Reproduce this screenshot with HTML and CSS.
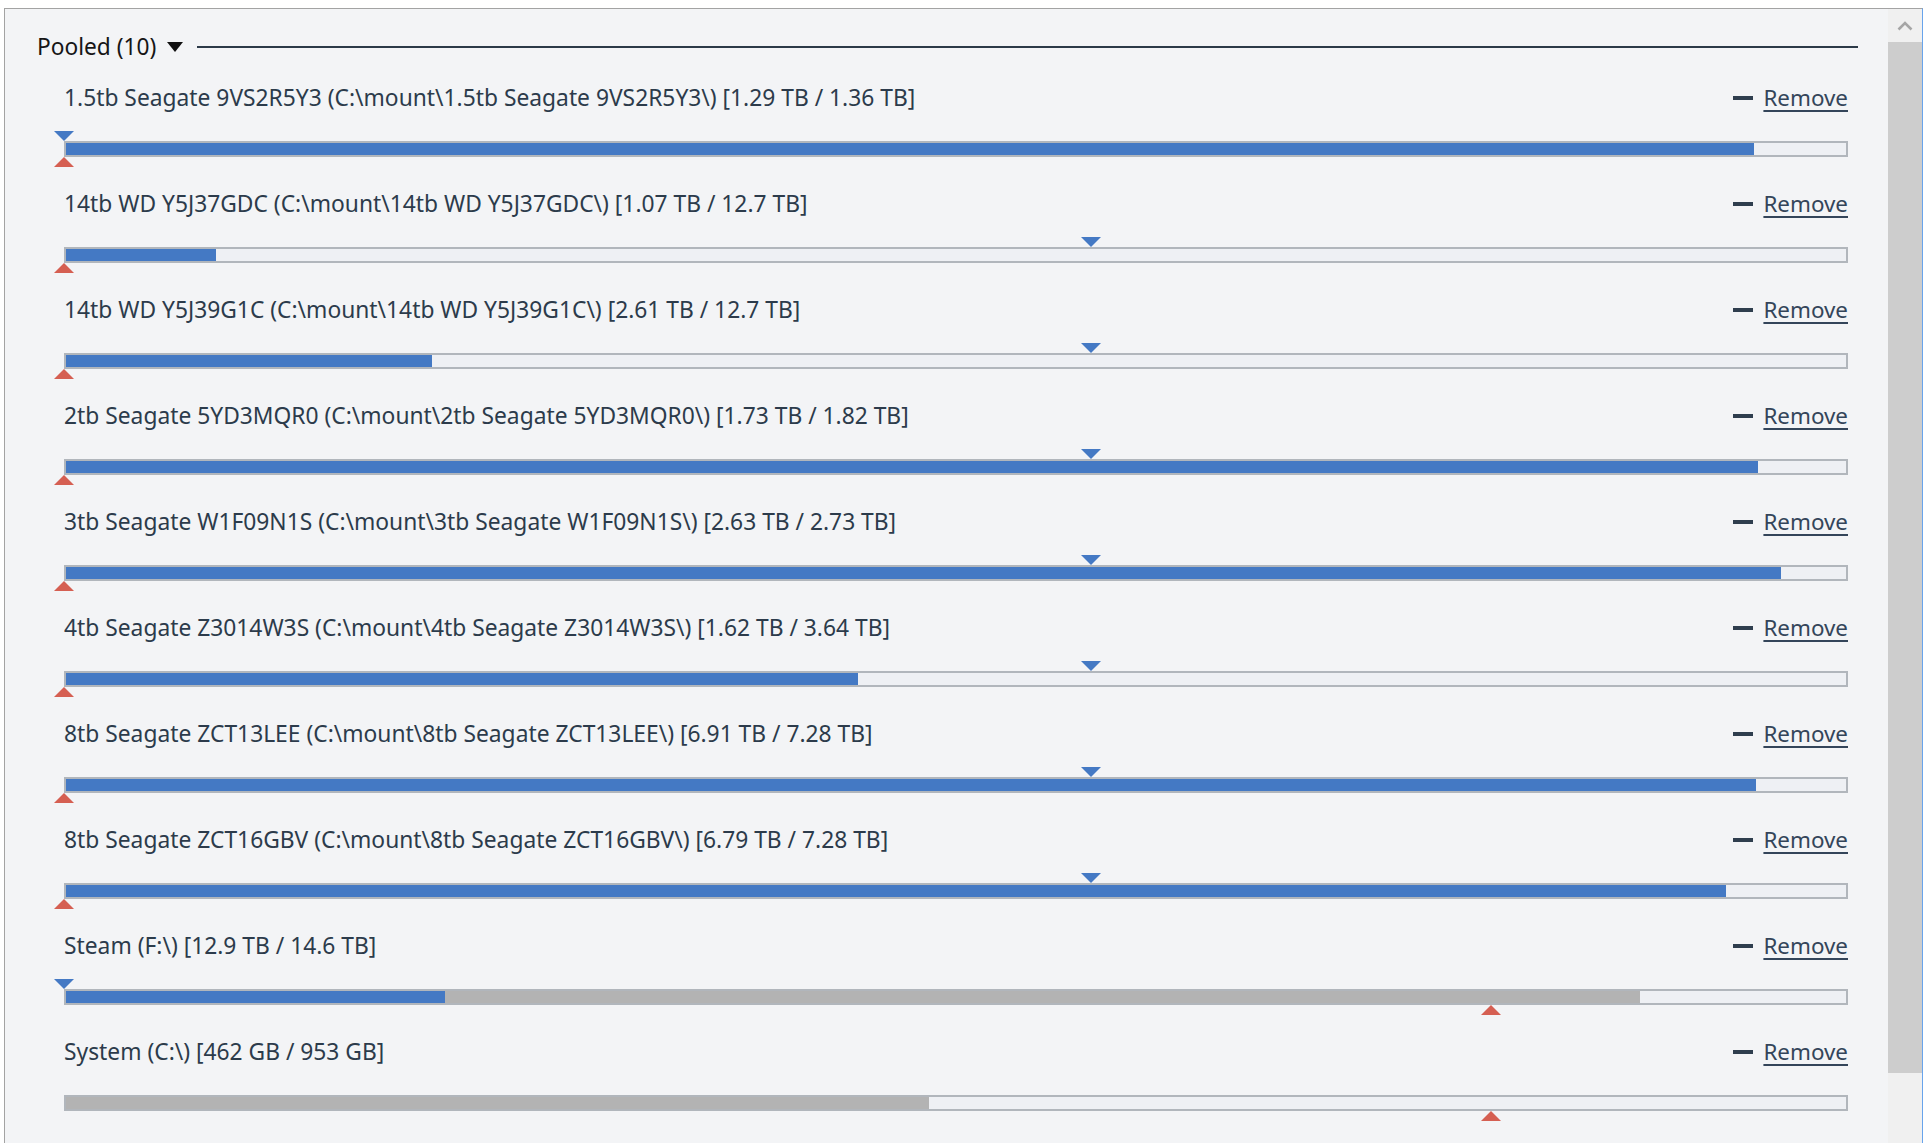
FILE: index.html
```html
<!DOCTYPE html>
<html>
<head>
<meta charset="utf-8">
<link rel="stylesheet" href="styles.css">
</head>
<body>
<div class="window">
  <div class="frame">
    <div class="content">
      <div class="legend">
        <span class="legend-title">Pooled (10)</span>
        <span class="caret"></span>
        <span class="legend-line"></span>
      </div>

      <div class="disk">
        <div class="disk-head"><span class="disk-name">1.5tb Seagate 9VS2R5Y3 (C:\mount\1.5tb Seagate 9VS2R5Y3\) [1.29 TB / 1.36 TB]</span><a class="remove"><span class="dash"></span><span class="remove-text">Remove</span></a></div>
        <div class="meter">
          <div class="track"><div class="fill fill-blue" style="width:94.85%"></div></div>
          <span class="mark mark-top" style="left:0%"></span>
          <span class="mark mark-bottom" style="left:0%"></span>
        </div>
      </div>

      <div class="disk">
        <div class="disk-head"><span class="disk-name">14tb WD Y5J37GDC (C:\mount\14tb WD Y5J37GDC\) [1.07 TB / 12.7 TB]</span><a class="remove"><span class="dash"></span><span class="remove-text">Remove</span></a></div>
        <div class="meter">
          <div class="track"><div class="fill fill-blue" style="width:8.43%"></div></div>
          <span class="mark mark-top" style="left:57.57%"></span>
          <span class="mark mark-bottom" style="left:0%"></span>
        </div>
      </div>

      <div class="disk">
        <div class="disk-head"><span class="disk-name">14tb WD Y5J39G1C (C:\mount\14tb WD Y5J39G1C\) [2.61 TB / 12.7 TB]</span><a class="remove"><span class="dash"></span><span class="remove-text">Remove</span></a></div>
        <div class="meter">
          <div class="track"><div class="fill fill-blue" style="width:20.55%"></div></div>
          <span class="mark mark-top" style="left:57.57%"></span>
          <span class="mark mark-bottom" style="left:0%"></span>
        </div>
      </div>

      <div class="disk">
        <div class="disk-head"><span class="disk-name">2tb Seagate 5YD3MQR0 (C:\mount\2tb Seagate 5YD3MQR0\) [1.73 TB / 1.82 TB]</span><a class="remove"><span class="dash"></span><span class="remove-text">Remove</span></a></div>
        <div class="meter">
          <div class="track"><div class="fill fill-blue" style="width:95.05%"></div></div>
          <span class="mark mark-top" style="left:57.57%"></span>
          <span class="mark mark-bottom" style="left:0%"></span>
        </div>
      </div>

      <div class="disk">
        <div class="disk-head"><span class="disk-name">3tb Seagate W1F09N1S (C:\mount\3tb Seagate W1F09N1S\) [2.63 TB / 2.73 TB]</span><a class="remove"><span class="dash"></span><span class="remove-text">Remove</span></a></div>
        <div class="meter">
          <div class="track"><div class="fill fill-blue" style="width:96.34%"></div></div>
          <span class="mark mark-top" style="left:57.57%"></span>
          <span class="mark mark-bottom" style="left:0%"></span>
        </div>
      </div>

      <div class="disk">
        <div class="disk-head"><span class="disk-name">4tb Seagate Z3014W3S (C:\mount\4tb Seagate Z3014W3S\) [1.62 TB / 3.64 TB]</span><a class="remove"><span class="dash"></span><span class="remove-text">Remove</span></a></div>
        <div class="meter">
          <div class="track"><div class="fill fill-blue" style="width:44.5%"></div></div>
          <span class="mark mark-top" style="left:57.57%"></span>
          <span class="mark mark-bottom" style="left:0%"></span>
        </div>
      </div>

      <div class="disk">
        <div class="disk-head"><span class="disk-name">8tb Seagate ZCT13LEE (C:\mount\8tb Seagate ZCT13LEE\) [6.91 TB / 7.28 TB]</span><a class="remove"><span class="dash"></span><span class="remove-text">Remove</span></a></div>
        <div class="meter">
          <div class="track"><div class="fill fill-blue" style="width:94.92%"></div></div>
          <span class="mark mark-top" style="left:57.57%"></span>
          <span class="mark mark-bottom" style="left:0%"></span>
        </div>
      </div>

      <div class="disk">
        <div class="disk-head"><span class="disk-name">8tb Seagate ZCT16GBV (C:\mount\8tb Seagate ZCT16GBV\) [6.79 TB / 7.28 TB]</span><a class="remove"><span class="dash"></span><span class="remove-text">Remove</span></a></div>
        <div class="meter">
          <div class="track"><div class="fill fill-blue" style="width:93.27%"></div></div>
          <span class="mark mark-top" style="left:57.57%"></span>
          <span class="mark mark-bottom" style="left:0%"></span>
        </div>
      </div>

      <div class="disk">
        <div class="disk-head"><span class="disk-name">Steam (F:\) [12.9 TB / 14.6 TB]</span><a class="remove"><span class="dash"></span><span class="remove-text">Remove</span></a></div>
        <div class="meter">
          <div class="track"><div class="fill fill-blue" style="width:21.3%"></div><div class="fill fill-gray" style="width:67.1%"></div></div>
          <span class="mark mark-top" style="left:0%"></span>
          <span class="mark mark-bottom" style="left:80%"></span>
        </div>
      </div>

      <div class="disk">
        <div class="disk-head"><span class="disk-name">System (C:\) [462 GB / 953 GB]</span><a class="remove"><span class="dash"></span><span class="remove-text">Remove</span></a></div>
        <div class="meter">
          <div class="track"><div class="fill fill-gray" style="width:48.5%"></div></div>
          <span class="mark mark-bottom" style="left:80%"></span>
        </div>
      </div>
    </div>

    <div class="scrollbar">
      <div class="scroll-btn">
        <svg width="16" height="11" viewBox="0 0 16 11"><polyline points="1.5,9.5 8,3 14.5,9.5" fill="none" stroke="#a6a6a6" stroke-width="2.6"/></svg>
      </div>
      <div class="scroll-thumb"></div>
      <div class="scroll-rest"></div>
    </div>
  </div>
</div>
</body>
</html>
```

FILE: styles.css
```css
* { box-sizing: border-box; }

html, body {
  margin: 0;
  padding: 0;
  background: #ffffff;
  overflow: hidden;
  height: 100%;
}

.window {
  height: 100vh;
  padding: 8px 0 0 4px;
}

.frame {
  display: flex;
  height: 100%;
  border-top: 1px solid #a3a3a3;
  border-left: 1px solid #a3a3a3;
  border-right: 1px solid #68a4ec;
  background: #f3f4f6;
}

.content {
  flex: 1;
  min-width: 0;
  padding: 23px 30px 0 32px;
  font-family: "Noto Sans", "Open Sans", sans-serif;
  overflow: hidden;
}

.legend {
  display: flex;
  align-items: center;
  height: 30px;
  margin-bottom: 21px;
}

.legend-title {
  font-size: 22.7px;
  color: #161616;
  line-height: 30px;
  white-space: nowrap;
}

.caret {
  width: 0;
  height: 0;
  border-left: 8.5px solid transparent;
  border-right: 8.5px solid transparent;
  border-top: 10px solid #111111;
  margin: 0 14px 0 11px;
}

.legend-line {
  flex: 1;
  height: 2px;
  background: #2c3a48;
}

.disk {
  margin: 0 10px 0 27px;
  padding-bottom: 22px;
}

.disk-head {
  display: flex;
  justify-content: space-between;
  align-items: center;
  height: 30px;
}

.disk-name {
  font-size: 22.8px;
  line-height: 30px;
  color: #2c3b4b;
  white-space: nowrap;
}

.remove {
  display: flex;
  align-items: center;
  color: #34455a;
  cursor: pointer;
}

.dash {
  width: 20px;
  height: 4px;
  background: #2f3e4e;
  margin-right: 10px;
}

.remove-text {
  font-size: 22.4px;
  line-height: 30px;
  text-decoration: underline;
  text-underline-offset: 4px;
}

.meter {
  position: relative;
  margin-top: 28px;
  margin-bottom: 10px;
}

.track {
  display: flex;
  height: 16px;
  border: 2px solid #b1b6bc;
  background: #eef0f4;
}

.fill {
  height: 100%;
}

.fill-blue { background: #4479c4; }
.fill-gray { background: #b3b3b3; }

.mark {
  position: absolute;
  width: 0;
  height: 0;
  margin-left: -10px;
  border-left: 10px solid transparent;
  border-right: 10px solid transparent;
}

.mark-top {
  top: -10px;
  border-top: 10px solid #4479c4;
}

.mark-bottom {
  bottom: -10px;
  border-bottom: 10px solid #d55f52;
}

.scrollbar {
  width: 34px;
  display: flex;
  flex-direction: column;
  background: #f0f0f0;
}

.scroll-btn {
  height: 33px;
  display: flex;
  align-items: center;
  justify-content: center;
}

.scroll-thumb {
  height: 1031px;
  background: #cdcdcd;
}

.scroll-rest {
  flex: 1;
}
```
